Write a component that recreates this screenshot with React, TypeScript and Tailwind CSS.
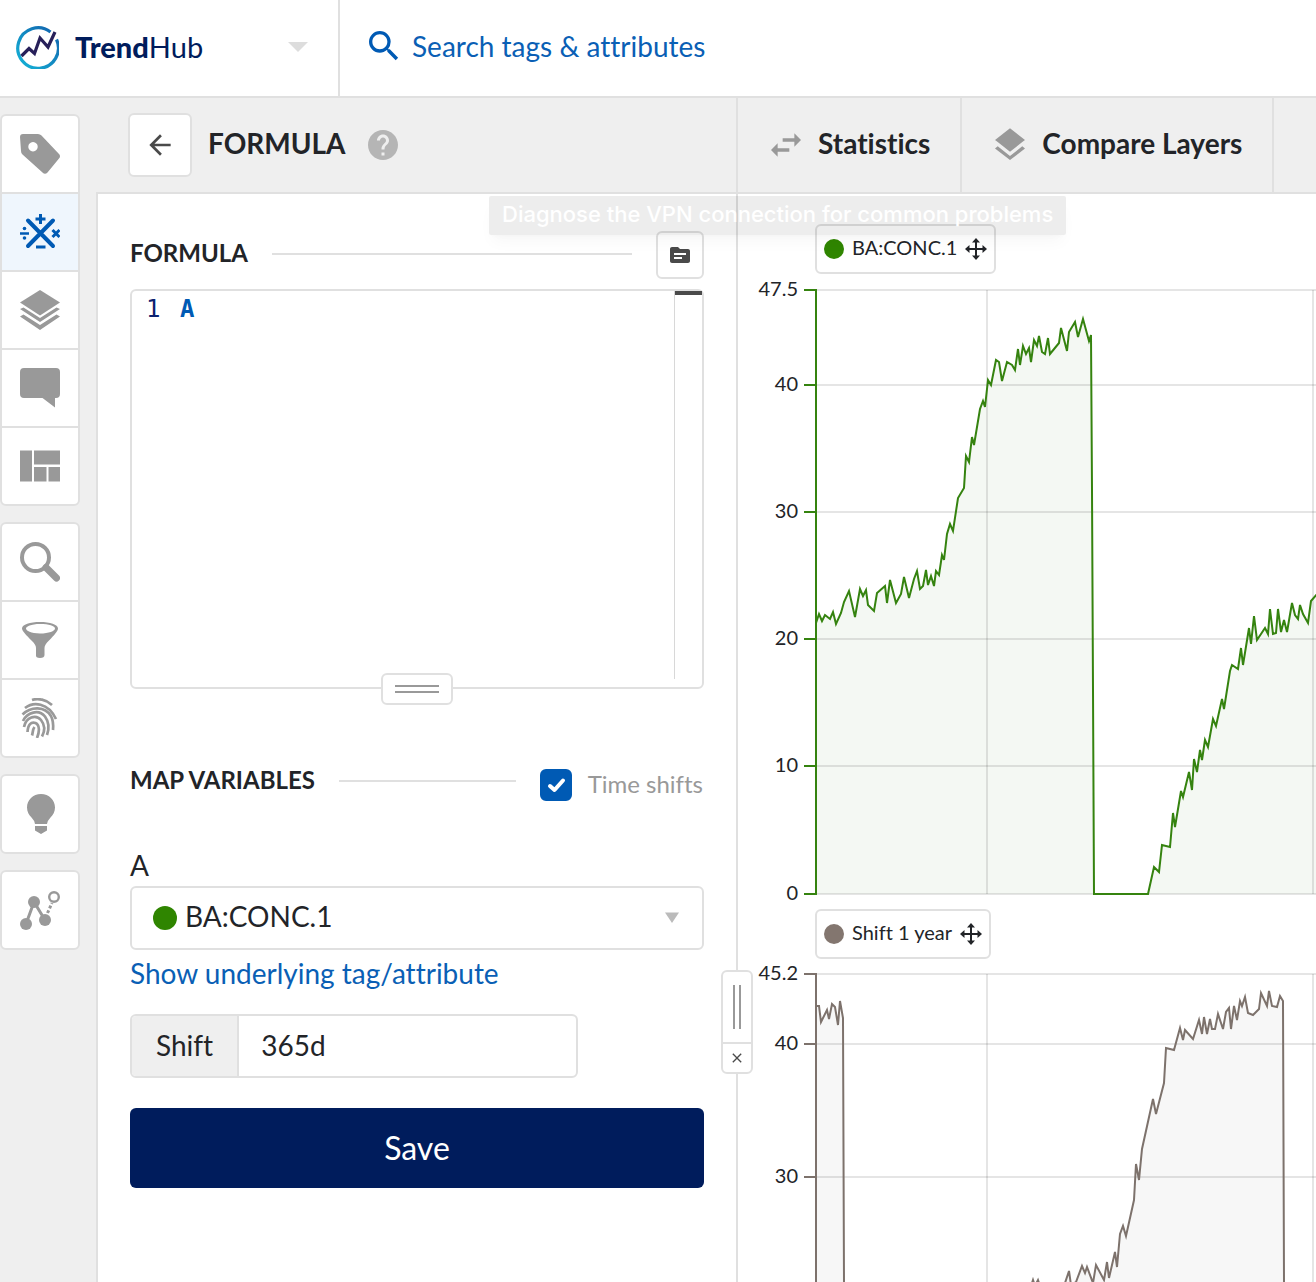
import { ReactNode, useState } from "react";
import { MdArrowBack, MdClose, MdHelp, MdLayers, MdSearch, MdSource, MdSwapHoriz } from "react-icons/md";

type Point = [number, number];
type Tick = { label: string; y: number };

// points are in px from the top left corner of the plot
const concPoints: Point[] = [
    [0, 333], [3, 324], [6, 331], [9, 325], [14, 329], [17, 322], [20, 334], [25, 323], [28, 312], [33, 301],
    [39, 327], [44, 299], [47, 306], [50, 300], [52, 315], [58, 321], [61, 303], [69, 296], [71, 313], [74, 290],
    [80, 313], [85, 304], [88, 287], [93, 308], [98, 289], [101, 281], [104, 299], [107, 296], [110, 280], [112, 295],
    [115, 286], [118, 296], [120, 281], [123, 285], [126, 265], [128, 270], [131, 244], [134, 234], [137, 241], [142, 208],
    [148, 198], [150, 166], [153, 172], [156, 147], [158, 155], [164, 119], [167, 111], [169, 117], [172, 90], [175, 95],
    [180, 70], [183, 72], [186, 91], [191, 72], [196, 75], [199, 80], [202, 59], [204, 75], [207, 56], [210, 64],
    [213, 58], [215, 72], [218, 50], [221, 56], [223, 46], [226, 62], [229, 64], [232, 48], [234, 64], [243, 53],
    [245, 38], [251, 61], [253, 42], [259, 32], [262, 47], [267, 29], [273, 51], [275, 45], [276, 200], [277, 400],
    [278, 604], [332, 604], [338, 577], [343, 582], [346, 555], [354, 557], [357, 523], [359, 537], [365, 501], [367, 507],
    [373, 482], [376, 500], [378, 469], [381, 482], [384, 460], [386, 470], [389, 450], [392, 457], [397, 429], [400, 436],
    [406, 409], [408, 419], [414, 381], [416, 375], [422, 379], [425, 358], [427, 375], [433, 338], [435, 354], [438, 326],
    [441, 350], [449, 338], [452, 344], [454, 319], [457, 344], [460, 343], [462, 319], [465, 342], [468, 330], [471, 342],
    [476, 313], [479, 325], [482, 329], [484, 315], [487, 324], [492, 333], [495, 311], [501, 304], [506, 310], [512, 298],
];

const shiftPoints: Point[] = [
    [0, 32], [3, 32], [5, 48], [11, 36], [13, 45], [16, 30], [19, 33], [22, 51], [24, 27], [27, 44],
    [28, 308], [29, 604], [200, 604], [216, 309], [217, 306], [219, 312], [222, 306], [224, 312], [249, 309], [253, 297],
    [255, 311], [260, 308], [266, 292], [269, 299], [271, 293], [277, 309], [280, 291], [288, 306], [291, 288], [293, 304],
    [299, 278], [301, 293], [304, 260], [307, 252], [310, 262], [318, 226], [320, 190], [323, 206], [326, 175], [337, 125],
    [340, 140], [348, 109], [350, 74], [358, 76], [364, 54], [367, 66], [369, 56], [377, 65], [383, 46], [386, 60],
    [388, 43], [391, 60], [394, 45], [396, 55], [399, 55], [402, 40], [407, 55], [410, 38], [413, 34], [415, 55],
    [418, 32], [421, 46], [424, 27], [426, 32], [429, 23], [432, 39], [437, 41], [443, 35], [445, 19], [451, 32],
    [453, 17], [456, 32], [461, 33], [464, 22], [467, 27], [468, 308], [469, 604],
];

const concTicks: Tick[] = [
    { label: "47.5", y: 0 },
    { label: "40", y: 95 },
    { label: "30", y: 222 },
    { label: "20", y: 349 },
    { label: "10", y: 476 },
    { label: "0", y: 604 },
];

const shiftTicks: Tick[] = [
    { label: "45.2", y: 0 },
    { label: "40", y: 70 },
    { label: "30", y: 203 },
];

const toolGroups: { name: string; icon: ReactNode; active?: boolean }[][] = [
    [
        {
            name: "Tags",
            icon: (
                <path fillRule="evenodd" d="M3 0H18Q20 0 21.500 1.500L39 20Q41 22 39 24.500L27.500 38.500Q25 41 22.500 38.500L2.500 20.500Q1 19 1 17L0 3Q0 0 3 0ZM13 8a4.700 4.700 0 1 0 .01 0Z" />
            ),
        },
        {
            name: "Formula",
            active: true,
            icon: (
                <g transform="translate(0 2)">
                    <path d="M8 6.500L33 32M33 6.500L8 32" stroke="currentColor" strokeWidth="4" strokeLinecap="round" />
                    <path d="M20.500 0V10M15.500 5H25.500M16 33H25.500" stroke="currentColor" strokeWidth="3" />
                    <path d="M0 19.500H9" stroke="currentColor" strokeWidth="2.500" />
                    <circle cx="4.500" cy="14.500" r="1.800" />
                    <circle cx="4.500" cy="24" r="1.800" />
                    <path d="M32.500 16L39.500 23M39.500 16L32.500 23" stroke="currentColor" strokeWidth="3" />
                </g>
            ),
        },
        {
            name: "Layers",
            icon: (
                <>
                    <path d="M20 0L40 12.500L20 25.500L0 12.500Z" />
                    <path d="M0 19L3.500 17.500L20 28L36.500 17.500L40 19L20 32Z" />
                    <path d="M0 26.500L3.500 24.500L20 35L36.500 24.500L40 26.500L20 40Z" />
                </>
            ),
        },
        { name: "Comments", icon: <path d="M4 0H36Q40 0 40 4V26Q40 30 36 30H35V39.500L22.500 30H4Q0 30 0 26V4Q0 0 4 0Z" /> },
        { name: "Dashboard", icon: <path d="M0 4.500H12V35.500H0ZM14 4.500H40V18.500H14ZM14 21H26.500V35.500H14ZM28.500 21H40V35.500H28.500Z" /> },
    ],
    [
        {
            name: "Search",
            icon: (
                <>
                    <circle cx="15.500" cy="15.500" r="13.500" fill="none" stroke="currentColor" strokeWidth="4" />
                    <path d="M26 25.500L36.500 36" stroke="currentColor" strokeWidth="7" strokeLinecap="round" />
                </>
            ),
        },
        {
            name: "Filter",
            icon: (
                <path fillRule="evenodd" d="M20 2C30 2 38 4.500 38 8.500C38 11 34 15.500 29 20.500C26 23.500 24.500 25.500 24.500 28V35Q24.500 38 20 38T16 35V28C16 25.500 14.500 23.500 11.500 20.500C6.500 15.500 2 11 2 8.500C2 4.500 10 2 20 2ZM20 4C11 4 6 6.500 6 8.500S11 13.500 20 13.500S35 11 35 8.500S29 4 20 4Z" />
            ),
        },
        {
            name: "Fingerprints",
            icon: (
                <g fill="none" stroke="currentColor" strokeWidth="2.700">
                    <path d="M12 2C18 0 26 1.500 32 7" />
                    <path d="M5 10C13 3.500 28 4 36 21" />
                    <path d="M2.500 16.500C11 8 25 8 31 18C33.500 23 33.500 27 33 32" />
                    <path d="M3 23C7 14 19 11 25 18.500C29 24 29.500 30 27 37" />
                    <path d="M4 29C6 19 16 16 21 22C25 27 25 33 22 38.500" />
                    <path d="M7.500 34C8 26.500 11 23.500 15.500 25C20 27 19.500 34 17 40" />
                    <path d="M12 37.500C13 34.500 12.500 31.500 14.500 29" />
                </g>
            ),
        },
    ],
    [
        {
            name: "Insights",
            icon: <path d="M21 0C29 0 35 6 35 13.500C35 18 33 21 30.500 23.500Q27.500 26.500 27 30H15Q14.500 26.500 11.500 23.500C9 21 7 18 7 13.500C7 6 13 0 21 0ZM15 32H27V36.500L21 40L15 36.500Z" />,
        },
    ],
    [
        {
            name: "Predictions",
            icon: (
                <g transform="translate(0 1)">
                    <path d="M6 33L14 11L25 29" fill="none" stroke="currentColor" strokeWidth="3" />
                    <circle cx="6" cy="33" r="6" />
                    <circle cx="14" cy="11" r="6" />
                    <circle cx="25" cy="29" r="6" />
                    <path d="M27.500 22L32 12" stroke="currentColor" strokeWidth="3" strokeDasharray="3 2" />
                    <circle cx="34" cy="6" r="4.800" fill="white" stroke="currentColor" strokeWidth="2.400" />
                </g>
            ),
        },
    ],
];

function Header() {
    return (
        <header className="flex h-[98px] shrink-0 border-b-2 border-[#e0e0e0] bg-white">
            <div className="flex w-[340px] shrink-0 items-center border-r-2 border-[#e0e0e0] pr-[30px] pb-[3px] pl-[15px]">
                <svg className="h-11 w-11" viewBox="0 0 44 44" fill="none" aria-hidden="true">
                    <defs>
                        <linearGradient id="ring" x1="0" y1="1" x2="1" y2="0">
                            <stop offset="0" stopColor="#14b5d8" />
                            <stop offset="1" stopColor="#1260ac" />
                        </linearGradient>
                    </defs>
                    <path d="M35.500 7A20.300 20.300 0 1 0 41.500 14.500" stroke="url(#ring)" strokeWidth="3.200" />
                    <path d="M6.500 31L14 23.500L19.500 28.500L25 13L33 22L40 7" stroke="#27205a" strokeWidth="3.200" />
                </svg>
                <div className="ml-4 text-[29px] leading-9 text-[#001c5c]">
                    <span className="font-black">Trend</span>
                    <span>Hub</span>
                </div>
                <button type="button" aria-label="Switch hub" className="ml-auto">
                    <svg className="h-5 w-5 fill-[#ddd]" viewBox="0 0 20 20">
                        <path d="M0 5H20L10 15Z" />
                    </svg>
                </button>
            </div>
            <label className="flex min-w-0 flex-1 items-center gap-2 pb-1 pl-6 text-[#005ab4]">
                <MdSearch size={40} />
                <input
                    type="text"
                    aria-label="Search tags & attributes"
                    placeholder="Search tags & attributes"
                    className="min-w-0 flex-1 text-[28px] leading-9 outline-none placeholder:text-[#0a5fb5]"
                />
            </label>
        </header>
    );
}

function ToolBar() {
    return (
        <nav className="flex w-24 shrink-0 flex-col items-start gap-4 pt-4">
            {toolGroups.map((group, idx) => (
                <div key={idx} className="w-20 divide-y-2 divide-[#e0e0e0] overflow-hidden rounded-md border-2 border-[#e0e0e0] bg-white">
                    {group.map(tool => (
                        <button
                            key={tool.name}
                            type="button"
                            aria-label={tool.name}
                            className={`flex w-full justify-center py-[18px] ${tool.active ? "bg-[#eff6fd] text-[#005ab4]" : "text-[#999]"}`}
                        >
                            <svg className="h-10 w-10 fill-current" viewBox="0 0 40 40">{tool.icon}</svg>
                        </button>
                    ))}
                </div>
            ))}
        </nav>
    );
}

function FormulaPanel() {
    const [formula, setFormula] = useState("A");
    const [hasShift, setHasShift] = useState(true);
    const [shift, setShift] = useState("365d");

    return (
        <section className="flex w-[642px] shrink-0 flex-col border-r-2 border-[#e0e0e0] bg-white">
            <div className="flex h-24 shrink-0 items-center border-b-2 border-[#e0e0e0] bg-[#efefef] pl-8">
                <button type="button" aria-label="Back" className="flex h-16 w-16 items-center justify-center rounded-md border-2 border-[#e0e0e0] bg-white text-[#4a4a4a]">
                    <MdArrowBack size={32} />
                </button>
                <h1 className="ml-4 pb-1 text-[28px] leading-9 font-bold">FORMULA</h1>
                <button type="button" aria-label="Help" className="ml-[19px] text-[#b5b5b5]">
                    <MdHelp size={36} />
                </button>
            </div>

            <form onSubmit={(e) => e.preventDefault()} className="flex flex-1 flex-col border-l-2 border-[#e0e0e0] px-8 pt-[37px]">
                <div className="flex items-center gap-6">
                    <h2 className="pb-1 text-2xl leading-8 font-bold">FORMULA</h2>
                    <hr className="mb-0.5 flex-1 border-t-2 border-[#e0e0e0]" />
                    <button type="button" aria-label="Load formula" className="flex h-12 w-12 items-center justify-center rounded-md border-2 border-[#e0e0e0] text-[#4a4a4a]">
                        <MdSource size={24} />
                    </button>
                </div>

                {/* editor */}
                <div className="relative mt-[10px] flex h-[400px] rounded-md border-2 border-[#e0e0e0] pl-[14px] font-['DejaVu_Sans_Mono','Liberation_Mono',monospace] text-2xl leading-9">
                    <span className="w-[34px] text-[#0b216f]">1</span>
                    <textarea
                        aria-label="Formula"
                        value={formula}
                        onChange={(e) => setFormula(e.target.value)}
                        className="flex-1 resize-none font-bold text-[#005ab4] outline-none"
                    />
                    <div className="mb-2 w-7 border-l border-[#d8d8d8]">
                        <div className="h-1 bg-[#4a4a4a]" />
                    </div>
                    <button
                        type="button"
                        aria-label="Resize editor"
                        className="absolute -bottom-[18px] left-1/2 flex h-8 w-[72px] -translate-x-1/2 flex-col items-center justify-center gap-1 rounded-md border-2 border-[#e0e0e0] bg-white"
                    >
                        <span className="h-0.5 w-11 bg-[#999]" />
                        <span className="h-0.5 w-11 bg-[#999]" />
                    </button>
                </div>

                <div className="mt-[79px] flex gap-6">
                    <h2 className="text-2xl leading-6 font-bold">MAP VARIABLES</h2>
                    <hr className="mt-3 flex-1 border-t-2 border-[#e0e0e0]" />
                    <label className="flex gap-4 pr-px text-2xl leading-8 text-[#999]">
                        <span className="relative mt-px flex h-8 w-8">
                            <input
                                type="checkbox"
                                checked={hasShift}
                                onChange={(e) => setHasShift(e.target.checked)}
                                className="peer h-8 w-8 appearance-none rounded-md border-2 border-[#e0e0e0] checked:border-[#005ab4] checked:bg-[#005ab4]"
                            />
                            <svg className="pointer-events-none absolute inset-0 hidden h-8 w-8 peer-checked:block" viewBox="0 0 32 32" fill="none">
                                <path d="M10 17L14.500 21L23 11.500" stroke="white" strokeWidth="4" strokeLinecap="round" strokeLinejoin="round" />
                            </svg>
                        </span>
                        Time shifts
                    </label>
                </div>

                <label htmlFor="variable" className="mt-[46px] mb-[3px] text-[28px] leading-9">A</label>
                <div className="relative">
                    <select id="variable" className="block h-16 w-full appearance-none rounded-md border-2 border-[#e0e0e0] bg-white pb-1 pl-[53px] text-[28px] leading-9 outline-none">
                        <option>BA:CONC.1</option>
                    </select>
                    <span className="pointer-events-none absolute top-5 left-[23px] h-6 w-6 rounded-full bg-[#2f8500]" />
                    <svg className="pointer-events-none absolute top-6 right-6 h-4 w-4 fill-[#bbb]" viewBox="0 0 16 16">
                        <path d="M1 2.500H15L8 13Z" />
                    </svg>
                </div>
                <a href="#underlying" className="mt-[5px] self-start text-[28px] leading-9 text-[#0a5fb5]">Show underlying tag/attribute</a>

                <div className="mt-[23px] flex h-16 w-[448px] overflow-hidden rounded-md border-2 border-[#e0e0e0] text-[28px] leading-9">
                    <label htmlFor="shift" className="flex items-center border-r-2 border-[#e0e0e0] bg-[#efefef] px-6 pb-0.5">Shift</label>
                    <input
                        id="shift"
                        type="text"
                        value={shift}
                        onChange={(e) => setShift(e.target.value)}
                        className="min-w-0 flex-1 px-[22px] pb-0.5 outline-none"
                    />
                </div>

                <button type="submit" className="mt-[30px] h-20 rounded-md bg-[#001c5c] text-[32px] leading-9 text-white">Save</button>
            </form>
        </section>
    );
}

function Legend({ name, color }: { name: string; color: string }) {
    return (
        <div className="ml-[77px] flex h-[50px] shrink-0 items-center gap-2 self-start rounded-md border-2 border-[#e0e0e0] bg-white px-[7px] text-xl leading-6">
            <span className={`h-5 w-5 rounded-full ${color}`} />
            <span className="pb-1">{name}</span>
            <button type="button" aria-label={`Move ${name}`}>
                <svg className="h-[22px] w-[22px] fill-current" viewBox="0 0 22 22">
                    <path d="M10 3H12V10H19V12H12V19H10V12H3V10H10Z" />
                    <path d="M11 0L15 4.500H7ZM11 22L7 17.500H15ZM0 11L4.500 7V15ZM22 11L17.500 15V7Z" />
                </svg>
            </button>
        </div>
    );
}

function Chart({ points, ticks, height, color, fill, className }: { points: Point[]; ticks: Tick[]; height: number; color: string; fill: string; className: string }) {
    const line = points.map(p => p.join(",")).join(" ");
    const last = points[points.length - 1][0];

    return (
        <svg className={`w-full overflow-visible ${className}`}>
            <g transform="translate(78 10)">
                <polygon points={`0,${height} ${line} ${last},${height}`} fill={fill} />
                {ticks.map(tick => (
                    <g key={tick.label}>
                        <line x1="0" x2="100%" y1={tick.y} y2={tick.y} stroke="#000" strokeOpacity=".1" strokeWidth="2" />
                        <line x1="-12" x2="1" y1={tick.y} y2={tick.y} stroke={color} strokeWidth="2" />
                        <text x="-18" y={tick.y + 6} textAnchor="end" fontSize="20" fill="#222428">{tick.label}</text>
                    </g>
                ))}
                {[171, 497, 823].map(x => (
                    <line key={x} x1={x} x2={x} y1="0" y2={height} stroke="#000" strokeOpacity=".1" strokeWidth="2" />
                ))}
                <line x1="0" x2="0" y1="0" y2={height} stroke={color} strokeWidth="2" />
                <polyline points={line} fill="none" stroke={color} strokeWidth="2" />
            </g>
        </svg>
    );
}

function ChartPanel() {
    return (
        <section className="flex min-w-0 flex-1 flex-col overflow-hidden bg-white">
            <div className="flex h-24 shrink-0 border-b-2 border-[#e0e0e0] bg-[#efefef] text-[28px] leading-9 font-bold">
                <button type="button" className="flex items-center gap-3 border-r-2 border-[#e0e0e0] pr-[30px] pl-7 whitespace-nowrap">
                    <MdSwapHoriz size={40} className="text-[#999]" />
                    <span className="pb-1">Statistics</span>
                </button>
                <button type="button" className="flex items-center gap-3 border-r-2 border-[#e0e0e0] pr-[30px] pl-7 whitespace-nowrap">
                    <MdLayers size={40} className="text-[#999]" />
                    <span className="pb-1">Compare Layers</span>
                </button>
            </div>
            <div className="flex min-h-0 flex-1 flex-col pt-[30px]">
                <Legend name="BA:CONC.1" color="bg-[#2f8500]" />
                <Chart points={concPoints} ticks={concTicks} height={604} color="#35830f" fill="#f4f8f3" className="mt-1.5 h-[620px] shrink-0" />
                <div className="mt-[9px] flex min-h-0 flex-1 flex-col">
                    <Legend name="Shift 1 year" color="bg-[#83766f]" />
                    <Chart points={shiftPoints} ticks={shiftTicks} height={604} color="#7d726c" fill="#f7f7f7" className="mt-[5px] min-h-0 flex-1" />
                </div>
            </div>
        </section>
    );
}

export default function App() {
    return (
        <div className="flex h-screen flex-col overflow-hidden bg-[#efefef] font-['Lato','Liberation_Sans',sans-serif] text-[#222428] [font-variant-ligatures:no-common-ligatures]">
            <Header />
            <main className="relative flex min-h-0 flex-1">
                <ToolBar />
                <FormulaPanel />
                <ChartPanel />

                {/* splitter between the form and the charts */}
                <div className="absolute top-[872px] left-[721px] flex w-8 flex-col rounded-md border-2 border-[#e0e0e0] bg-white">
                    <button type="button" aria-label="Resize panel" className="flex h-[72px] items-center justify-center gap-1 border-b-2 border-[#e0e0e0]">
                        <span className="h-11 w-0.5 bg-[#999]" />
                        <span className="h-11 w-0.5 bg-[#999]" />
                    </button>
                    <button type="button" aria-label="Close panel" className="flex h-7 items-center justify-center text-[#4a4a4a]">
                        <MdClose size={16} />
                    </button>
                </div>

                <div role="tooltip" className="pointer-events-none absolute top-[98px] left-[489px] rounded-xs bg-black/7 px-[13px] pt-0.5 pb-[5px] font-['Inter',sans-serif] text-[22px] leading-8 font-medium whitespace-nowrap text-white shadow-lg shadow-black/3">
                    Diagnose the VPN connection for common problems
                </div>
            </main>
        </div>
    );
}
